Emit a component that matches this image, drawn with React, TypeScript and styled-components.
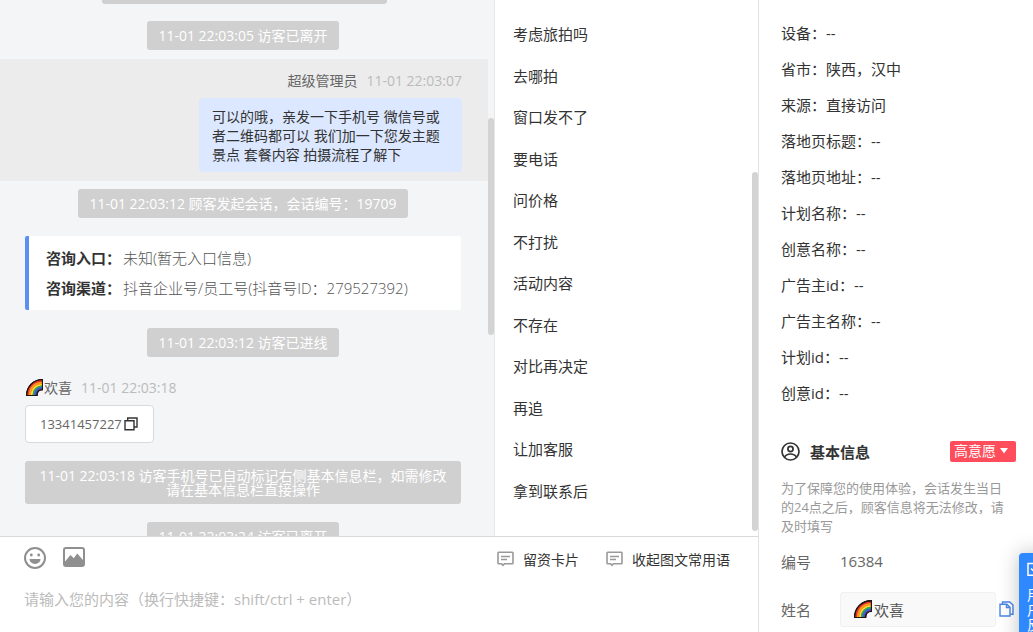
import React from "react";
import styled, { createGlobalStyle } from "styled-components";

const GlobalStyle = createGlobalStyle`
  *, *::before, *::after { box-sizing: border-box; }
  body {
    margin: 0;
    font-family: "Open Sans", "Noto Sans CJK SC", sans-serif;
    font-size: 15px;
    color: #333;
    background: #fff;
  }
  button, input, textarea { font: inherit; color: inherit; }
  p, h2, ul, dl, dd { margin: 0; padding: 0; }
`;

const Page = styled.div`
  display: grid;
  grid-template-columns: minmax(0, 1fr) 275px;
  height: 100vh;
  overflow: hidden;
  position: relative;
`;

const Workspace = styled.main`
  display: flex;
  flex-direction: column;
  min-height: 0;
`;

const Panels = styled.div`
  flex: 1;
  min-height: 0;
  display: grid;
  grid-template-columns: minmax(0, 1fr) 264px;
`;

const Chat = styled.section`
  position: relative;
  overflow: hidden;
  display: flex;
  flex-direction: column;
  padding-right: 6px;
  background: #f4f5f7;
`;

const Thumb = styled.span<{ $top: string; $height: string }>`
  position: absolute;
  right: 0;
  top: ${(p) => p.$top};
  height: ${(p) => p.$height};
  width: 6px;
  border-radius: 3px;
  background: #d3d3d3;
`;

const NoticeRow = styled.div`
  flex: none;
  display: flex;
  justify-content: center;
  padding: 0 27px 0 25px;
  margin-bottom: 18px;
`;

const Notice = styled.p`
  padding: 8px 11px 7px;
  border-radius: 3px;
  background: #d0d0d0;
  color: #fff;
  font-size: 14px;
  line-height: 14px;
  text-align: center;
`;

const PreviousNotice = styled.div`
  flex: none;
  width: 285px;
  height: 4px;
  margin: 0 auto 17px;
  border-radius: 0 0 3px 3px;
  background: #d0d0d0;
`;

const Time = styled.time`
  font-size: 14px;
`;

const Message = styled.article<{ $own?: boolean }>`
  flex: none;
  display: flex;
  flex-direction: column;
  align-items: ${(p) => (p.$own ? "flex-end" : "flex-start")};
  padding: ${(p) => (p.$own ? "10px 26px 9px 25px" : "1px 27px 0 25px")};
  margin: ${(p) => (p.$own ? "-9px 0 8px" : "0 0 18px")};
  background: ${(p) => (p.$own ? "#ececec" : "transparent")};
`;

const Author = styled.header`
  display: flex;
  align-items: center;
  height: 22px;
  margin-bottom: 7px;
  color: #666;
  font-size: 14px;
  svg { margin: 0 1px; }
  ${Time} {
    margin-left: 9px;
    color: #bbb;
  }
`;

const Bubble = styled.p`
  width: 263px;
  padding: 9px 13px 8px;
  border-radius: 4px;
  background: #dce8ff;
  font-size: 14px;
  line-height: 19px;
`;

const PhoneBubble = styled.div`
  display: flex;
  align-items: center;
  gap: 2px;
  height: 38px;
  padding: 0 15px 0 14px;
  border: 1px solid #d8dadd;
  border-radius: 4px;
  background: #fff;
  color: #666;
  font-size: 13px;
`;

const IconButton = styled.button`
  display: flex;
  padding: 0;
  border: 0;
  background: none;
  cursor: pointer;
`;

const SourceCard = styled.dl`
  flex: none;
  margin: 0 27px 18px 25px;
  padding: 7px 17px;
  border-left: 4px solid #5b8ff0;
  border-radius: 2px;
  background: #fff;
`;

const SourceLine = styled.div`
  display: flex;
  line-height: 30px;
  white-space: nowrap;
  dt { font-weight: 700; }
  dd { margin-left: 2px; color: #555; font-weight: 300; }
`;

const Phrases = styled.ul`
  position: relative;
  display: grid;
  grid-auto-rows: 1fr;
  padding: 13px 18px 25px;
  border-left: 1px solid #e8e8e8;
  list-style: none;
`;

const Phrase = styled.button`
  height: 100%;
  padding: 0;
  border: 0;
  background: none;
  text-align: left;
  cursor: pointer;
`;

const Editor = styled.section`
  flex: none;
  padding: 10px 24px 0;
  border-top: 1px solid #d9d9d9;
`;

const Toolbar = styled.div`
  display: flex;
  align-items: flex-start;
  gap: 17px;
  color: #8f8f8f;
`;

const ToolLinks = styled.div`
  display: flex;
  gap: 27px;
  margin-left: auto;
  padding: 1px 4px 0 0;
`;

const TextTool = styled.button`
  display: flex;
  align-items: center;
  gap: 9px;
  height: 22px;
  padding: 0;
  border: 0;
  background: none;
  color: #333;
  font-size: 14px;
  cursor: pointer;
`;

const Draft = styled.textarea`
  display: block;
  width: 100%;
  height: 44px;
  margin-top: 18px;
  padding: 0;
  border: 0;
  outline: 0;
  resize: none;
  background: none;
  line-height: 22px;
  &::placeholder { color: #bbb; }
`;

const Details = styled.aside`
  padding: 15px 17px 0 22px;
  border-left: 1px solid #e2e2e2;
  overflow: hidden;
`;

const Fact = styled.p`
  line-height: 36px;
`;

const InfoHeader = styled.header`
  display: flex;
  align-items: center;
  height: 22px;
  margin-top: 29px;
`;

const InfoTitle = styled.h2`
  margin: 0 auto 0 10px;
  font-size: 15px;
  font-weight: 700;
`;

const Intent = styled.button`
  display: flex;
  align-items: center;
  gap: 4px;
  height: 21px;
  padding: 0 8px 0 4px;
  border: 0;
  border-radius: 2px;
  background: #ff4d5b;
  color: #fff;
  font-size: 14px;
  line-height: 20px;
  cursor: pointer;
`;

const Hint = styled.p`
  margin-top: 17px;
  padding-right: 5px;
  color: #999;
  font-size: 13px;
  line-height: 19px;
`;

const Field = styled.div`
  display: grid;
  grid-template-columns: 59px minmax(0, 1fr) 17px;
  align-items: center;
  height: 36px;
  color: #666;
`;

const NumberField = styled(Field)`
  margin: 7px 0 12px;
`;

const NameBox = styled.div`
  display: flex;
  align-items: center;
  height: 35px;
  margin-right: 3px;
  padding: 0 13px;
  border: 1px solid #f1f1f1;
  border-radius: 3px;
  background: #f9f9f9;
  color: #555;
`;

const NameInput = styled.input`
  min-width: 0;
  flex: 1;
  padding: 0 0 0 2px;
  border: 0;
  outline: 0;
  background: none;
`;

const Feedback = styled.button`
  position: absolute;
  right: -17px;
  bottom: -15px;
  width: 31px;
  height: 94px;
  padding: 8px 8px 0;
  border: 0;
  border-radius: 4px;
  background: #3088ff;
  color: #fff;
  font-size: 14px;
  line-height: 15px;
  box-shadow: 0 0 20px rgba(0, 0, 0, 0.25);
  cursor: pointer;
  svg { display: block; }
  span { display: block; width: 14px; margin-top: 10px; }
`;

const Rainbow = ({ size }: { size: number }) => (
  <svg width={size} height={size} viewBox="0 0 16 16" aria-hidden="true">
    <path d="M.5 15.5C.5 7 7 .5 15.5.5v9.5c-3 0-5 2-5 5.5z" fill="#e8302a" stroke="#1c1614" />
    <path d="M3.6 15C3.6 8.5 8.5 3.6 15 3.6" fill="none" stroke="#fb9a1c" strokeWidth="2" />
    <path d="M5.4 15C5.4 9.5 9.5 5.4 15 5.4" fill="none" stroke="#f7e12d" strokeWidth="1.6" />
    <path d="M6.9 15C6.9 10.5 10.5 6.9 15 6.9" fill="none" stroke="#2fa866" strokeWidth="1.6" />
    <path d="M8.4 15C8.4 11.3 11.3 8.4 15 8.4" fill="none" stroke="#2867d8" strokeWidth="1.6" />
    <path d="M9.8 15C9.8 12 12 9.8 15 9.8" fill="none" stroke="#5a2d91" strokeWidth="1.2" />
    <path d="M.5 15.5C.5 7 7 .5 15.5.5V10.2c-3.2 0-5.3 2-5.3 5.3z" fill="none" stroke="#1c1614" />
  </svg>
);

const CopySquares = () => (
  <svg width="14" height="14" viewBox="0 0 14 14" fill="none" stroke="#333" strokeWidth="1.4" aria-hidden="true">
    <path d="M1 3.7h9v9H1zM3.7 3.7V1H13v9h-3" />
  </svg>
);

const Smiley = () => (
  <svg width="22" height="22" viewBox="0 0 22 22" aria-hidden="true">
    <circle cx="11" cy="11" r="10" fill="none" stroke="currentColor" strokeWidth="2" />
    <circle cx="7.3" cy="8" r="1.4" fill="currentColor" />
    <circle cx="14.7" cy="8" r="1.4" fill="currentColor" />
    <path d="M5.5 12h11c0 2.8-2.5 4.9-5.5 4.9S5.5 14.8 5.5 12z" fill="currentColor" />
  </svg>
);

const Picture = () => (
  <svg width="22" height="20" viewBox="0 0 22 20" aria-hidden="true">
    <rect x="1" y="1" width="20" height="18" rx="2" fill="none" stroke="currentColor" strokeWidth="2" />
    <path d="M2 14.5 7.5 8l3.3 3.3L14.2 6.5 20 13v5.5H2z" fill="currentColor" />
  </svg>
);

const Comment = () => (
  <svg width="17" height="16" viewBox="0 0 17 16" fill="none" stroke="#999" strokeWidth="1.6" aria-hidden="true">
    <path d="M1.8 1.3h13.4a.8.8 0 0 1 .8.8v9.8a.8.8 0 0 1-.8.8H7.5L6 14.3l-1.5-1.6H1.8a.8.8 0 0 1-.8-.8V2.1a.8.8 0 0 1 .8-.8z" />
    <path d="M4 5.5h9M4 8.5h6" strokeWidth="1.3" />
  </svg>
);

const Person = () => (
  <svg width="19" height="19" viewBox="0 0 19 19" fill="none" stroke="#333" strokeWidth="1.7" aria-hidden="true">
    <circle cx="9.5" cy="9.5" r="8.5" />
    <circle cx="9.5" cy="7" r="2.6" />
    <path d="M3.5 15.3c1.2-2.3 3.3-3.3 6-3.3s4.8 1 6 3.3" />
  </svg>
);

const Caret = () => (
  <svg width="8" height="6" viewBox="0 0 8 6" aria-hidden="true">
    <path d="M0 0h8L4 5.5z" fill="#fff" />
  </svg>
);

const CopyPages = () => (
  <svg width="15" height="16" viewBox="0 0 15 16" fill="none" stroke="#4a86e8" strokeWidth="1.4" aria-hidden="true">
    <path d="M1 3.2h6.8l3.2 3V15H1z" />
    <path d="M7.5 3.5v3h3.3M3.5 3V1h7.3L14 4v9.2h-2.8" />
  </svg>
);

const CheckBoxMark = () => (
  <svg width="15" height="15" viewBox="0 0 15 15" fill="none" stroke="#fff" strokeWidth="1.5" aria-hidden="true">
    <path d="M14 7v6.2H1V1.5h10M4 6.5l3 3L13.5 3" />
  </svg>
);

const phrases = [
  "考虑旅拍吗", "去哪拍", "窗口发不了", "要电话", "问价格", "不打扰",
  "活动内容", "不存在", "对比再决定", "再追", "让加客服", "拿到联系后",
];

const facts = [
  ["设备", "--"], ["省市", "陕西，汉中"], ["来源", "直接访问"], ["落地页标题", "--"],
  ["落地页地址", "--"], ["计划名称", "--"], ["创意名称", "--"], ["广告主id", "--"],
  ["广告主名称", "--"], ["计划id", "--"], ["创意id", "--"],
];

const SystemNotice = ({ time, children }: { time: string; children: React.ReactNode }) => (
  <NoticeRow>
    <Notice><Time>{time}</Time> {children}</Notice>
  </NoticeRow>
);

export default function App() {
  return (
    <Page>
      <GlobalStyle />
      <Workspace>
        <Panels>
          <Chat>
            <PreviousNotice />
            <SystemNotice time="11-01 22:03:05">访客已离开</SystemNotice>
            <Message $own>
              <Author>超级管理员<Time>11-01 22:03:07</Time></Author>
              <Bubble>可以的哦，亲发一下手机号 微信号或者二维码都可以 我们加一下您发主题景点 套餐内容 拍摄流程了解下</Bubble>
            </Message>
            <SystemNotice time="11-01 22:03:12">顾客发起会话，会话编号：19709</SystemNotice>
            <SourceCard>
              <SourceLine><dt>咨询入口：</dt><dd>未知(暂无入口信息)</dd></SourceLine>
              <SourceLine><dt>咨询渠道：</dt><dd>抖音企业号/员工号(抖音号ID：279527392)</dd></SourceLine>
            </SourceCard>
            <SystemNotice time="11-01 22:03:12">访客已进线</SystemNotice>
            <Message>
              <Author><Rainbow size={17} />欢喜<Time>11-01 22:03:18</Time></Author>
              <PhoneBubble>
                13341457227
                <IconButton aria-label="复制手机号"><CopySquares /></IconButton>
              </PhoneBubble>
            </Message>
            <SystemNotice time="11-01 22:03:18">访客手机号已自动标记右侧基本信息栏，如需修改请在基本信息栏直接操作</SystemNotice>
            <SystemNotice time="11-01 22:03:24">访客已离开</SystemNotice>
            <Thumb $top="22%" $height="217px" />
          </Chat>
          <Phrases>
            {phrases.map((text) => <li key={text}><Phrase>{text}</Phrase></li>)}
            <Thumb as="li" aria-hidden="true" $top="32%" $height="67%" />
          </Phrases>
        </Panels>
        <Editor>
          <Toolbar>
            <IconButton aria-label="表情"><Smiley /></IconButton>
            <IconButton aria-label="图片"><Picture /></IconButton>
            <ToolLinks>
              <TextTool><Comment />留资卡片</TextTool>
              <TextTool><Comment />收起图文常用语</TextTool>
            </ToolLinks>
          </Toolbar>
          <Draft aria-label="消息内容" placeholder="请输入您的内容（换行快捷键：shift/ctrl + enter）" />
        </Editor>
      </Workspace>
      <Details>
        {facts.map(([label, value]) => <Fact key={label}>{label}：{value}</Fact>)}
        <InfoHeader>
          <Person />
          <InfoTitle>基本信息</InfoTitle>
          <Intent>高意愿<Caret /></Intent>
        </InfoHeader>
        <Hint>为了保障您的使用体验，会话发生当日的24点之后，顾客信息将无法修改，请及时填写</Hint>
        <NumberField><span>编号</span><span>16384</span></NumberField>
        <Field>
          <label htmlFor="visitor-name">姓名</label>
          <NameBox>
            <Rainbow size={18} />
            <NameInput id="visitor-name" defaultValue="欢喜" />
          </NameBox>
          <IconButton aria-label="复制姓名"><CopyPages /></IconButton>
        </Field>
      </Details>
      <Feedback><CheckBoxMark /><span>用户反馈</span></Feedback>
    </Page>
  );
}
